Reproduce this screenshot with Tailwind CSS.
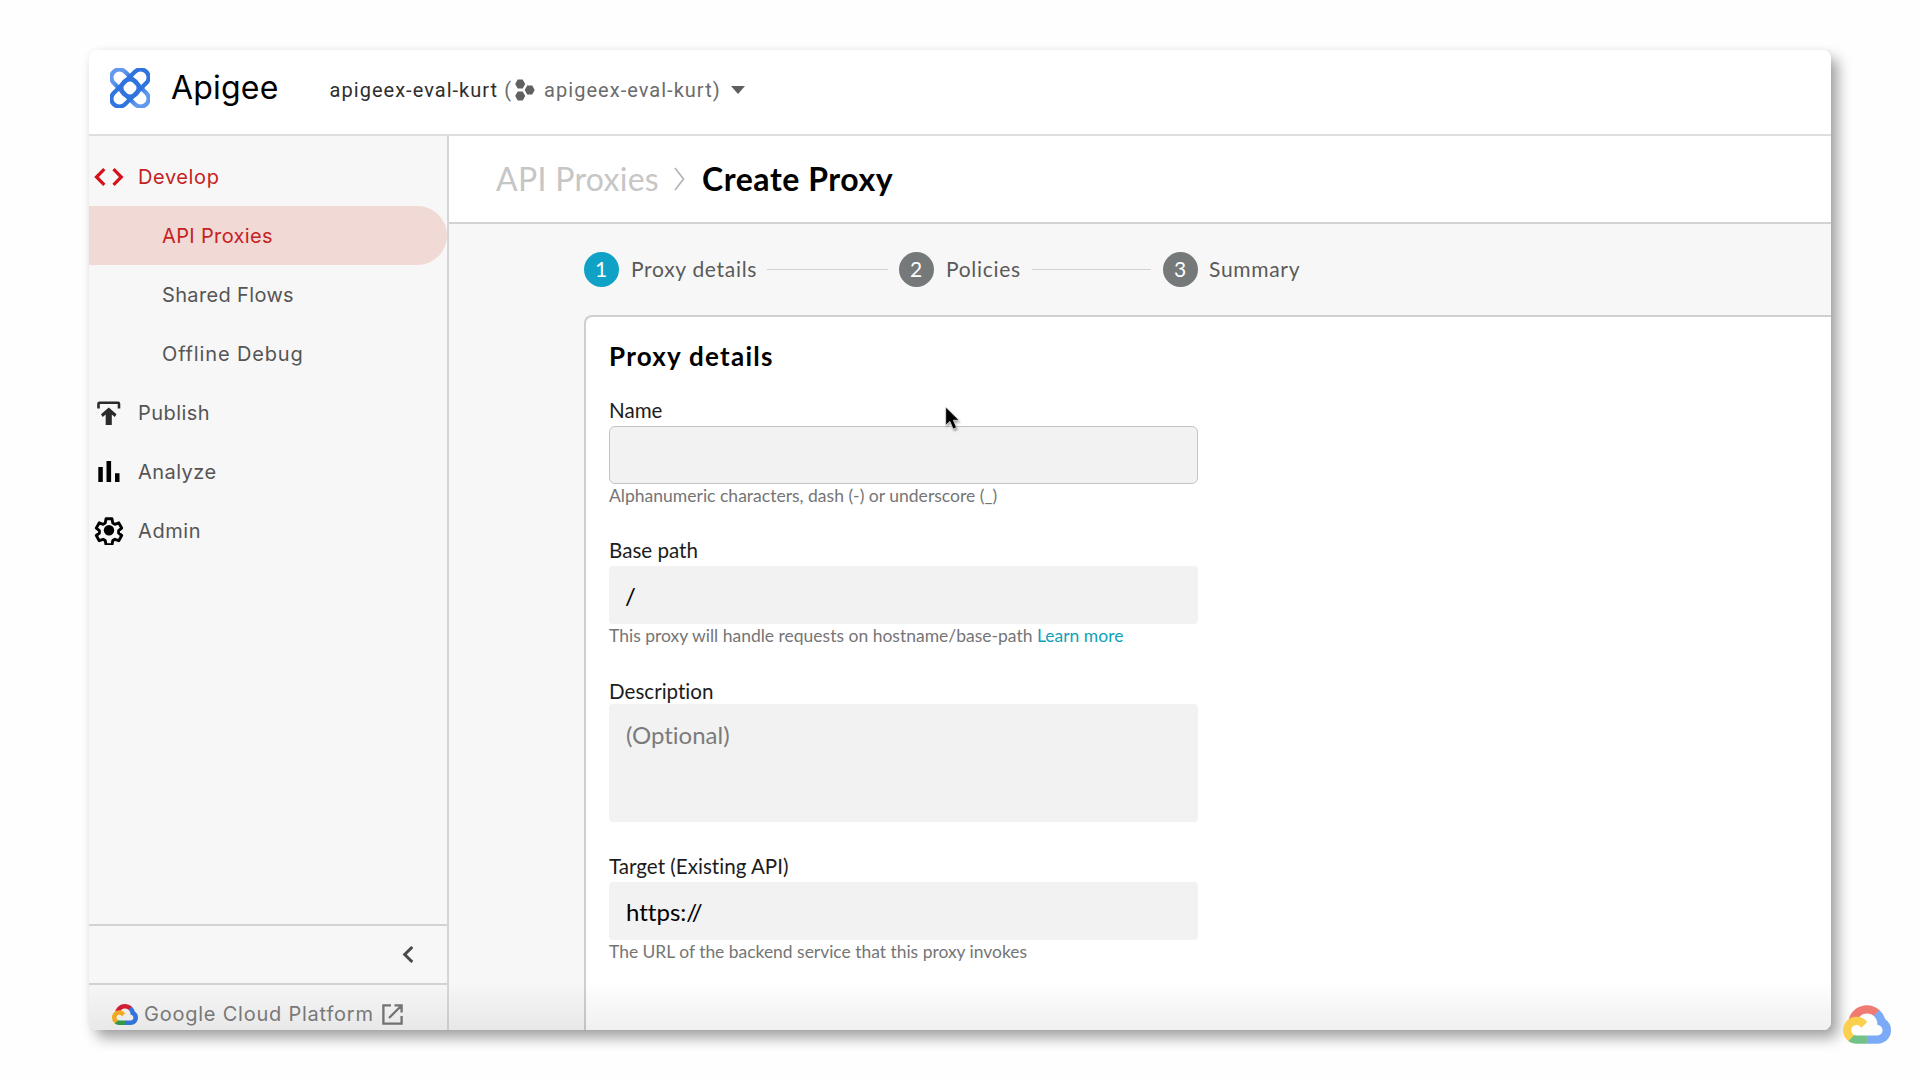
<!DOCTYPE html>
<html lang="en">
<head>
<meta charset="utf-8">
<title>Apigee - Create Proxy</title>
<script src="https://cdn.jsdelivr.net/npm/@tailwindcss/browser@4"></script>
</head>
<body class="relative h-screen overflow-hidden bg-[#fefefe] pt-[50px] pl-[89px] font-['Lato',sans-serif] text-black [font-variant-ligatures:none]">

<svg class="hidden">
  <symbol id="cloud" viewBox="0 0 256 206">
    <path fill="var(--r)" d="M170.252 56.819l22.253-22.253 1.483-9.37C153.437-11.677 88.976-7.496 52.42 33.92 42.267 45.423 34.734 59.764 30.717 74.573l7.97-1.123 44.505-7.34 3.436-3.513c19.797-21.742 53.27-24.667 76.128-6.168l7.496.39z"/>
    <path fill="var(--b)" d="M224.205 73.918a100.249 100.249 0 0 0-30.217-48.722l-31.232 31.232a55.515 55.515 0 0 1 20.379 44.037v5.544c15.35 0 27.797 12.445 27.797 27.796 0 15.352-12.446 27.573-27.797 27.573h-55.671v44.505h55.67c39.93.311 72.553-31.494 72.864-71.424a72.303 72.303 0 0 0-31.793-60.54"/>
    <path fill="var(--g)" d="M71.87 205.796h55.593V161.29H71.87a27.275 27.275 0 0 1-11.4-2.498l-7.887 2.42-22.409 22.253-1.952 7.574c12.567 9.489 27.9 14.825 43.647 14.757"/>
    <path fill="var(--y)" d="M71.87 61.425C31.94 61.663-.237 94.228.001 134.158a72.301 72.301 0 0 0 28.222 56.88l32.248-32.246c-13.99-6.322-20.208-22.786-13.887-36.776 6.32-13.99 22.786-20.208 36.775-13.888a27.796 27.796 0 0 1 13.887 13.888l32.248-32.248A72.224 72.224 0 0 0 71.87 61.425"/>
  </symbol>
</svg>

<div class="relative flex h-[980px] w-[1742px] flex-col overflow-clip rounded-lg bg-white shadow-[7px_8px_14px_rgba(0,0,0,0.36),0_0_6px_rgba(0,0,0,0.04)]">

  <header class="flex h-[86px] shrink-0 items-center border-b-2 border-[#dedede] pb-1 pl-[21px]">
    <svg class="mb-1 size-10" viewBox="0 0 40 40" fill="none" stroke-width="4.2">
      <defs><linearGradient id="fade" x1="0" y1="0" x2="1" y2="0"><stop offset="0.15" stop-color="#6299ee"/><stop offset="0.38" stop-color="#2f74df"/><stop offset="0.62" stop-color="#2f74df"/><stop offset="0.85" stop-color="#6299ee"/></linearGradient></defs>
      <rect x="-3" y="12" width="46" height="16" rx="8" stroke="url(#fade)" transform="rotate(45 20 20)"/>
      <rect x="-3" y="12" width="46" height="16" rx="8" stroke="#2f74df" transform="rotate(-45 20 20)"/>
      <circle cx="20" cy="20" r="8.6" stroke="#2f74df"/>
    </svg>
    <span class="mb-1 ml-[21px] font-['Inter',sans-serif] text-[32px] leading-10 tracking-[0.2px]">Apigee</span>
    <div class="ml-[51px] flex items-center font-['Roboto',sans-serif] text-xl tracking-[1.03px] text-[#6b6b6b]">
      <span class="text-[#2e2e2e]">apigeex-eval-kurt</span>
      <span class="ml-[6px]">(</span>
      <svg class="ml-[3px] h-[22px] w-5" viewBox="0 0 20 22" fill="#616161"><path d="M2.7.6h5L10.200 5 7.700 9.400h-5L.2 5zM2.700 12.600h5l2.500 4.400-2.500 4.400h-5L.2 17zM12.200 6.600h5l2.500 4.400-2.500 4.400h-5L9.700 11z"/></svg>
      <span class="ml-[9px]">apigeex-eval-kurt)</span>
      <svg class="ml-[10px] h-[8px] w-[14px]" viewBox="0 0 14 8" fill="#5f5f5f"><path d="M0 0h14L7 8z"/></svg>
    </div>
  </header>

  <div class="flex min-h-0 flex-1">
    <aside class="flex w-[360px] shrink-0 flex-col border-r-2 border-[#d6d6d6] bg-[#f7f7f7] font-['Inter',sans-serif] text-xl tracking-[0.45px] text-[#555]">
      <nav class="flex-1 pt-[11px]">
        <a class="flex h-[59px] items-center text-[#c5221f]">
          <svg class="ml-[5px] h-[18px] w-[30px]" viewBox="0 0 30 18" fill="none" stroke="#d5111b" stroke-width="3.200"><path d="M10.300 1.200 2.500 9l7.800 7.800M19.500 1.200 27.300 9l-7.800 7.800"/></svg>
          <span class="ml-[14px] tracking-[0.6px]">Develop</span>
        </a>
        <a class="flex h-[59px] items-center rounded-r-full bg-[#f1d9d6] pl-[73px] text-[#c5221f] tracking-[0.35px]">API Proxies</a>
        <a class="flex h-[59px] items-center pl-[73px] tracking-[0.35px]">Shared Flows</a>
        <a class="flex h-[59px] items-center pl-[73px] tracking-[0.85px]">Offline Debug</a>
        <a class="flex h-[59px] items-center">
          <svg class="ml-[6px] h-6 w-[29px]" viewBox="0 0 29 24" fill="none" stroke="#2b2b2b"><path stroke-width="2.600" d="M3.500 7.500V2.800q0-1 1-1h18.500q1 0 1 1v4.700"/><path fill="#2b2b2b" stroke="none" d="M10.700 24V13.500l-3 2.400-1.700-2.700L13.750 6.500 21.500 13.200l-1.700 2.700-3-2.400V24z"/></svg>
          <span class="ml-[14px]">Publish</span>
        </a>
        <a class="flex h-[59px] items-center">
          <svg class="ml-[5px] h-[21px] w-[30px]" viewBox="0 0 30 21" fill="#000"><path d="M4.300 6h4.500v15H4.300zM12.500 0h4.600v21h-4.600zM21 12.200h4.500V21H21z"/></svg>
          <span class="ml-[14px]">Analyze</span>
        </a>
        <a class="flex h-[59px] items-center">
          <svg class="mb-px ml-[5px] size-[30px]" viewBox="0 0 30 30" fill="none" stroke="#000" stroke-width="3" stroke-linejoin="round"><path d="M11.900 2h6.200l.8 4.200 2.200 1.300 4.100-1.400 3 5.200-3.200 2.500v2.400l3.200 2.500-3 5.200-4.100-1.400-2.200 1.300-.8 4.200h-6.200l-.8-4.200-2.200-1.300-4.100 1.400-3-5.200L5 16.200v-2.400l-3.200-2.500 3-5.200 4.100 1.400 2.200-1.300z" transform="translate(.6 1.800) scale(.96 1)"/><circle cx="15" cy="15.300" r="5.200" fill="#000" stroke="none"/></svg>
          <span class="ml-[14px] tracking-[0.6px]">Admin</span>
        </a>
      </nav>
      <div class="flex h-[59px] items-center justify-end border-t-2 border-[#d3d3d3] pr-[33px]">
        <svg class="h-[17px] w-[12px]" viewBox="0 0 12 17" fill="none" stroke="#4a4a4a" stroke-width="3"><path d="M10.300 1 2.700 8.500l7.600 7.500"/></svg>
      </div>
      <div class="h-[47px] overflow-hidden border-t-2 border-[#d3d3d3]">
        <a class="flex h-[58px] items-center pl-[23px] text-[#7d7d7d]">
          <svg class="h-[21px] w-[26px] [--b:#3578e5] [--g:#34a04c] [--r:#d81e34] [--y:#fbb022]"><use href="#cloud"/></svg>
          <span class="ml-[6px] tracking-[0.77px]">Google Cloud Platform</span>
          <svg class="ml-[8px] size-[21px]" viewBox="0 0 21 21" fill="none" stroke="#777" stroke-width="2.300"><path d="M9 1.400H1.400v18.200h18.200V12M12.500 1.400h7.100v7.100M19 2 7 14"/></svg>
        </a>
      </div>
    </aside>

    <main class="flex min-w-0 flex-1 flex-col bg-[#f7f7f7]">
      <div class="flex h-[88px] shrink-0 items-center border-b-2 border-[#d3d3d3] bg-white pl-[47px] text-[32px] leading-10">
        <span class="tracking-[0.3px] text-[#c6c6c6]">API Proxies</span>
        <svg class="ml-[15px] h-6 w-[11px]" viewBox="0 0 11 24" fill="none" stroke="#b5b5b5" stroke-width="1.700"><path d="M1 1l8.500 11L1 23"/></svg>
        <span class="ml-[17px] font-bold tracking-[0.55px]">Create Proxy</span>
      </div>

      <div class="flex h-[91px] shrink-0 items-center pl-[135px] text-[21px] leading-[35px] tracking-[0.7px] whitespace-nowrap text-[#5a5a5a]">
        <span class="size-[35px] rounded-full bg-[#0fa2c6] text-center leading-[34px] text-white">1</span>
        <span class="mb-0.5 ml-[12px] w-[127px]">Proxy details</span>
        <span class="ml-[9px] h-px w-[121px] bg-[#d2d2d2]"></span>
        <span class="ml-[11px] size-[35px] rounded-full bg-[#75797a] text-center leading-[34px] text-white">2</span>
        <span class="mb-0.5 ml-[12px] w-[76px]">Policies</span>
        <span class="ml-[10px] h-px w-[119px] bg-[#d2d2d2]"></span>
        <span class="ml-[12px] size-[35px] rounded-full bg-[#75797a] text-center leading-[34px] text-white">3</span>
        <span class="mb-0.5 ml-[11px]">Summary</span>
      </div>

      <section class="ml-[135px] flex-1 rounded-tl-lg border-t-2 border-l-2 border-[#cfcfcf] bg-white pt-[23px] pl-[23px]">
        <h2 class="text-[26px] leading-8 font-bold tracking-[1.25px]">Proxy details</h2>
        <div class="mt-[26px] flex w-[589px] flex-col text-[20.600px] leading-6 text-[#1c1c1c]">
          <label>Name</label>
          <div class="mt-1 h-[58px] rounded-md border border-[#c4c4c4] bg-[#f2f2f2]"></div>
          <p class="mt-0.5 text-[17.550px] leading-5 text-[#757575]">Alphanumeric characters, dash (-) or underscore (_)</p>

          <label class="mt-8">Base path</label>
          <div class="mt-1 flex h-[58px] items-center rounded-sm bg-[#f2f2f2] pt-0.5 pl-4 text-2xl text-black">/</div>
          <p class="mt-0.5 text-[17.500px] leading-5 text-[#757575]">This proxy will handle requests on hostname/base-path <a class="text-[#0fa2b8]">Learn more</a></p>

          <label class="mt-[33px]">Description</label>
          <div class="mt-px h-[118px] rounded-sm bg-[#f2f2f2] pt-[17px] pl-[17px] text-2xl leading-7 text-[#7b7b7b]">(Optional)</div>

          <label class="mt-8">Target (Existing API)</label>
          <div class="mt-1 flex h-[58px] items-center rounded-sm bg-[#f2f2f2] pt-0.5 pl-[17px] text-2xl text-black">https://</div>
          <p class="mt-0.5 text-[17.450px] leading-5 text-[#757575]">The URL of the backend service that this proxy invokes</p>
        </div>
      </section>
    </main>
  </div>

  <div class="pointer-events-none absolute inset-x-0 bottom-0 h-[50px] bg-linear-to-b from-transparent to-black/6"></div>
</div>

<svg class="absolute top-[406px] left-[944px] h-[27px] w-[19px] drop-shadow-[1px_2px_1px_rgba(0,0,0,0.35)]" viewBox="0 0 18 26"><path d="M1.500 1v17.500l4-3.700 3.100 7.300 3.300-1.400-3.100-7h5.500z" fill="#000" stroke="#fff" stroke-width=".6"/></svg>

<svg class="absolute top-[1005px] left-[1843px] h-[39px] w-12 [--b:#7baaf7] [--g:#71c287] [--r:#f07b72] [--y:#fcd04f]"><use href="#cloud"/></svg>

</body>
</html>
